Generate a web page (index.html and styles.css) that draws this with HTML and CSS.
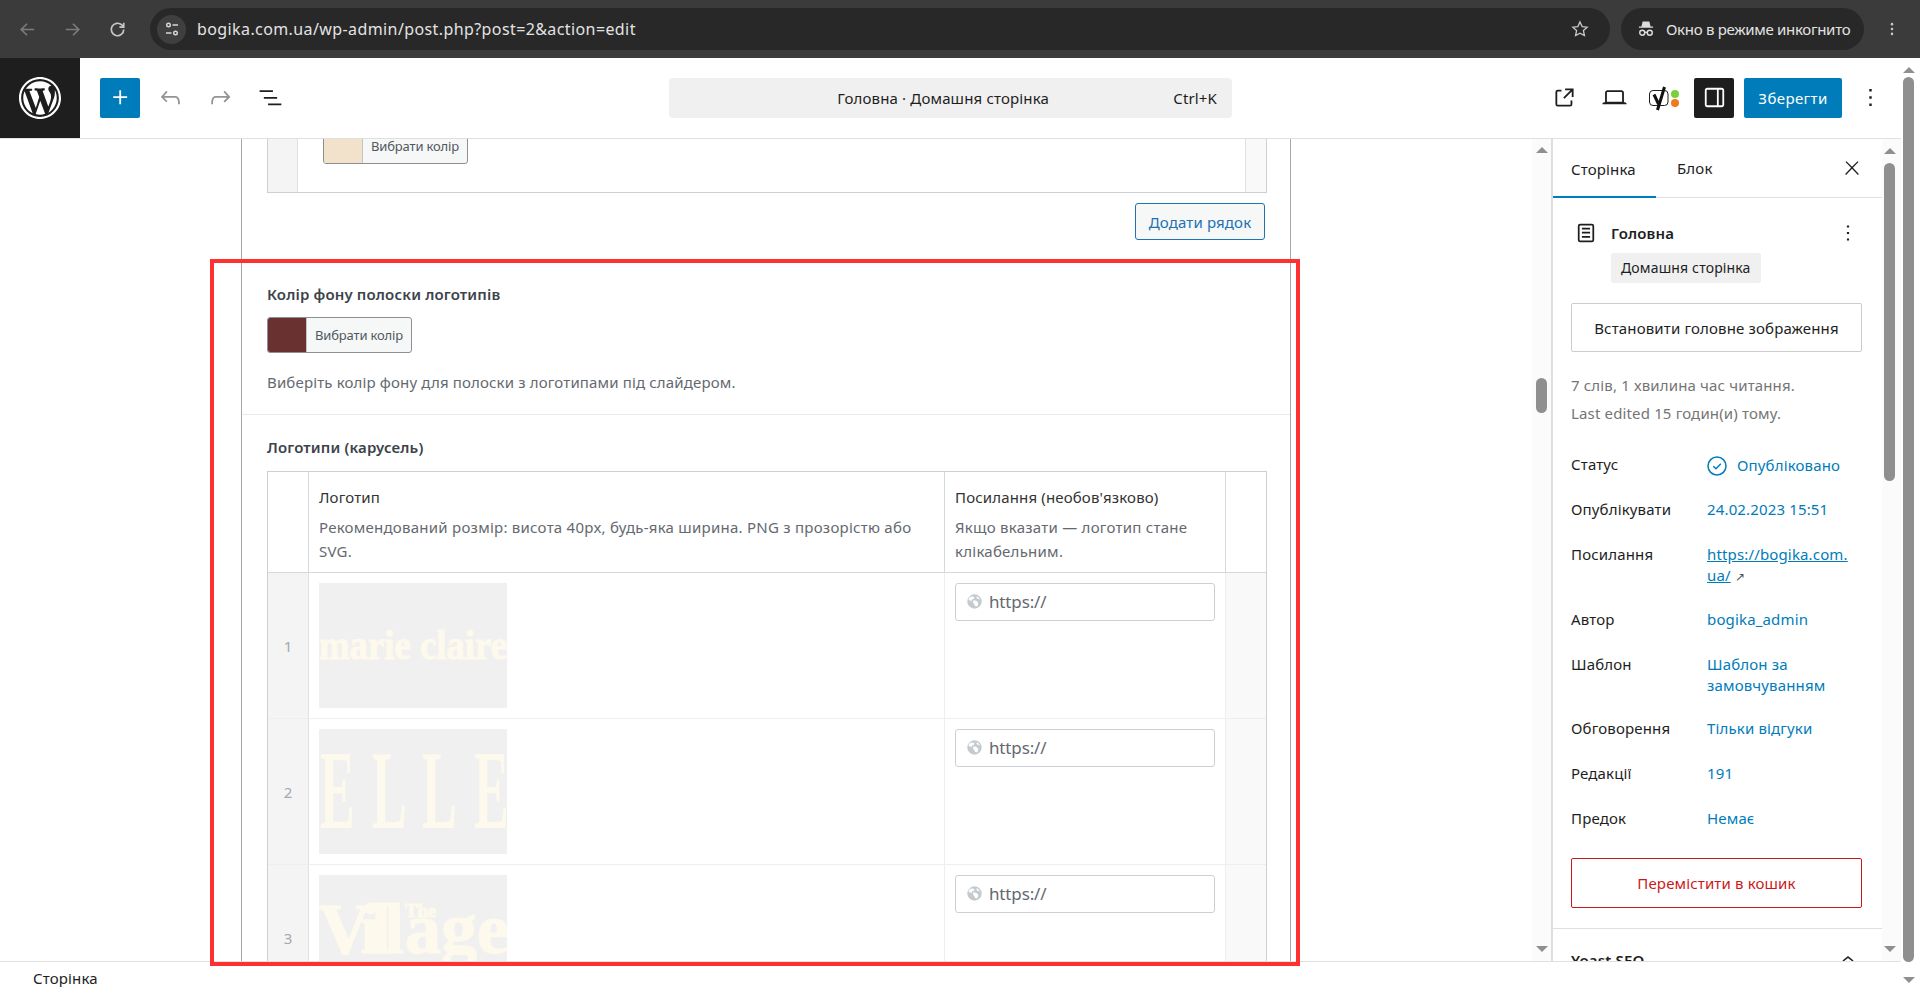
FILE: index.html
```html
<!DOCTYPE html>
<html lang="uk">
<head>
<meta charset="utf-8">
<title>Головна</title>
<link rel="stylesheet" href="styles.css">
</head>
<body>
<div class="browser">
  <div class="nav-icons">
    <svg class="ch-icon dim" viewBox="0 0 24 24"><path d="M19 12H6M11.500 6l-6 6 6 6"/></svg>
    <svg class="ch-icon dim" viewBox="0 0 24 24"><path d="M5 12h13M12.500 6l6 6-6 6"/></svg>
    <svg class="ch-icon" viewBox="0 0 24 24"><path d="M18.500 12a6.500 6.500 0 1 1-2-4.700L18.500 9.500M18.500 5v4.500H14"/></svg>
  </div>
  <div class="urlbar">
    <span class="site-pill"><svg viewBox="0 0 16 16"><circle cx="4.500" cy="4" r="1.800"/><path d="M8.500 4H14M2 12h5.500"/><circle cx="11.500" cy="12" r="1.800"/></svg></span>
    <span class="url">bogika.com.ua/wp-admin/post.php?post=2&amp;action=edit</span>
    <svg class="star" viewBox="0 0 24 24"><path d="M12 3.500l2.600 5.600 6 .7-4.500 4.100 1.200 6L12 17l-5.300 2.900 1.200-6-4.500-4.100 6-.7z"/></svg>
  </div>
  <div class="incognito">
    <svg viewBox="0 0 24 24"><path class="fill" d="M8 3h8l1.500 6h3v1.500h-17V9h3z"/><circle cx="7.500" cy="16.500" r="3"/><circle cx="16.500" cy="16.500" r="3"/><path d="M10.500 16h3"/></svg>
    <span>Окно в режиме инкогнито</span>
  </div>
  <svg class="ch-kebab" viewBox="0 0 24 24"><circle cx="12" cy="5.500" r="1.700"/><circle cx="12" cy="12" r="1.700"/><circle cx="12" cy="18.500" r="1.700"/></svg>
</div>

<div class="app">
  <div class="page">
    <header class="topbar">
      <a class="wp-logo"><svg viewBox="0 0 20 20"><path d="M20 10c0-5.520-4.480-10-10-10S0 4.480 0 10s4.480 10 10 10 10-4.480 10-10zM10 1.010c4.970 0 8.990 4.020 8.990 8.990s-4.020 8.990-8.990 8.990S1.010 14.970 1.010 10 5.030 1.010 10 1.010zM8.010 14.820L4.960 6.610c.49-.03 1.050-.08 1.050-.08.43-.05.38-1.010-.06-.99 0 0-1.290.1-2.130.1-.15 0-.33 0-.52-.01 1.440-2.170 3.900-3.600 6.700-3.600 2.090 0 3.990.79 5.410 2.090-.6-.08-1.450.35-1.450 1.420 0 .66.38 1.220.79 1.880.31.54.5 1.220.5 2.210 0 1.340-1.270 4.480-1.270 4.480l-2.710-7.500c.48-.03.75-.16.75-.16.43-.05.38-1.100-.05-1.080 0 0-1.300.11-2.140.11-.78 0-2.110-.11-2.110-.11-.43-.02-.48 1.060-.05 1.080l.84.08 1.120 3.040zm6.020 2.150L16.640 10s.67-1.690.39-3.810c.63 1.140.94 2.420.94 3.810 0 2.960-1.560 5.580-3.940 6.970zM2.680 6.770L6.500 17.250c-2.670-1.300-4.470-4.080-4.470-7.250 0-1.160.2-2.230.65-3.230zm7.450 4.530l2.290 6.250c-.75.27-1.570.42-2.420.42-.72 0-1.410-.11-2.060-.3z"/></svg></a>
      <div class="tools-left">
        <button class="tool primary"><svg viewBox="0 0 24 24"><path d="M11 12.500V17.500H12.500V12.500H17.500V11H12.500V6H11V11H6V12.500H11Z"/></svg></button>
        <button class="tool muted"><svg viewBox="0 0 24 24"><path d="M18.300 11.700c-.6-.6-1.400-.9-2.300-.9H6.700l2.900-3.300-1.100-1-4.500 5L8.500 16l1-1-2.700-2.700H16c.5 0 .9.2 1.300.5 1 1 1 3.400 1 4.500v.3h1.500v-.2c0-1.500 0-4.300-1.500-5.700z"/></svg></button>
        <button class="tool muted"><svg viewBox="0 0 24 24"><path d="M15.600 6.500l-1.100 1 2.900 3.300H8c-.9 0-1.700.3-2.300.9-1.400 1.500-1.400 4.200-1.400 5.600v.2h1.500v-.3c0-1.100 0-3.500 1-4.500.3-.3.7-.5 1.300-.5h9.200L14.500 15l1.100 1.100 4.600-4.600-4.600-5z"/></svg></button>
        <button class="tool"><svg viewBox="0 0 24 24"><path d="M3 6h11v1.500H3V6zm3.500 5.500h11V13h-11v-1.500zM21 17H10v1.500h11V17z"/></svg></button>
      </div>
      <div class="command">
        <span class="command-title">Головна · Домашня сторінка</span>
        <span class="command-key">Ctrl+K</span>
      </div>
      <div class="tools-right">
        <button class="tool"><svg viewBox="0 0 24 24"><path d="M19.500 4.500h-7V6h4.440l-5.970 5.970 1.060 1.060L18 7.060v4.440h1.500v-7Zm-13 1a2 2 0 0 0-2 2v10a2 2 0 0 0 2 2h10a2 2 0 0 0 2-2v-3H17v3a.5.5 0 0 1-.5.5h-10a.5.5 0 0 1-.5-.5v-10a.5.5 0 0 1 .5-.5h3V5.500h-3Z"/></svg></button>
        <button class="tool"><svg viewBox="0 0 24 24"><path d="M20.500 16h-.7V8c0-1.100-.9-2-2-2H6.200c-1.100 0-2 .9-2 2v8h-.7c-.8 0-1.500.7-1.500 1.500h20c0-.8-.7-1.500-1.500-1.500zM5.700 8c0-.3.2-.5.5-.5h11.600c.3 0 .5.2.5.5v7.600H5.700V8z"/></svg></button>
        <button class="tool"><svg class="yoast" viewBox="0 0 36 28"><rect class="y-box" x="3.500" y="6.500" width="18.500" height="15" rx="3.500"/><path class="y-mark" d="M8 10.500l4.500 9.500M18.500 3l-7 23"/><circle class="y-green" cx="29" cy="10" r="4"/><circle class="y-orange" cx="29" cy="19" r="4"/></svg></button>
        <button class="tool active"><svg viewBox="0 0 24 24"><path d="M18 4H6c-1.100 0-2 .9-2 2v12c0 1.100.9 2 2 2h12c1.100 0 2-.9 2-2V6c0-1.100-.9-2-2-2zm-4 14.500H6c-.3 0-.5-.2-.5-.5V6c0-.3.2-.5.5-.5h8v13zm4.500-.5c0 .3-.2.5-.5.5h-2.500v-13H18c.3 0 .5.2.5.5v12z"/></svg></button>
        <button class="save">Зберегти</button>
        <button class="tool kebab"><svg viewBox="0 0 24 24"><path d="M13 19h-2v-2h2v2zm0-6h-2v-2h2v2zm0-6h-2V5h2v2z"/></svg></button>
      </div>
    </header>

    <div class="workspace">
      <main class="canvas">
        <div class="metabox">
          <table class="repeater short">
            <tr>
              <td class="short-num"></td>
              <td class="short-main"><div class="short-inner">
                <button class="picker"><span class="swatch cream"></span><span class="picker-label">Вибрати колір</span></button>
              </div></td>
              <td class="short-end"></td>
            </tr>
          </table>
          <div class="add-row"><button class="add-btn">Додати рядок</button></div>

          <section class="field color-field">
            <div class="field-label">Колір фону полоски логотипів</div>
            <button class="picker"><span class="swatch wine"></span><span class="picker-label">Вибрати колір</span></button>
            <p class="field-desc">Виберіть колір фону для полоски з логотипами під слайдером.</p>
          </section>

          <section class="field logos-field">
            <div class="field-label logos-label">Логотипи (карусель)</div>
            <table class="repeater logos">
              <colgroup><col class="c-num"><col class="c-logo"><col class="c-link"><col class="c-end"></colgroup>
              <thead>
                <tr>
                  <th></th>
                  <th><div class="th-title">Логотип</div><div class="th-desc">Рекомендований розмір: висота 40px, будь-яка ширина. PNG з прозорістю або SVG.</div></th>
                  <th><div class="th-title">Посилання (необов'язково)</div><div class="th-desc">Якщо вказати — логотип стане клікабельним.</div></th>
                  <th></th>
                </tr>
              </thead>
              <tbody>
                <tr>
                  <td class="num">1</td>
                  <td class="logo-cell"><div class="logo-img"><svg viewBox="0 0 188 125"><text class="lg" x="0" y="76" font-size="42" textLength="188" lengthAdjust="spacingAndGlyphs">marie claire</text></svg></div></td>
                  <td class="link-cell"><div class="url-input"><svg class="globe" viewBox="0 0 20 20"><path d="M10 1.500a8.500 8.500 0 1 0 0 17 8.500 8.500 0 0 0 0-17zM5 4.500l3.500-.5 1.500 1.500-1 1.500-2 .5-.5 2L4 8.500l-1-.5A7 7 0 0 1 5 4.500zm8 11.500l-2.500-1-1-2.500L8 11l1-2.500 3 .5 2.500 2.500L14 14zM15 7l-2-.5-1-2 1.500-.5A7 7 0 0 1 16.500 8z"/></svg><span>https://</span></div></td>
                  <td class="end"></td>
                </tr>
                <tr>
                  <td class="num">2</td>
                  <td class="logo-cell"><div class="logo-img"><svg viewBox="0 0 188 125"><text class="lg elle" transform="translate(1 99) scale(.46 1)" x="0 113 222 335" y="0" font-size="113">ELLE</text></svg></div></td>
                  <td class="link-cell"><div class="url-input"><svg class="globe" viewBox="0 0 20 20"><path d="M10 1.500a8.500 8.500 0 1 0 0 17 8.500 8.500 0 0 0 0-17zM5 4.500l3.500-.5 1.500 1.500-1 1.500-2 .5-.5 2L4 8.500l-1-.5A7 7 0 0 1 5 4.500zm8 11.500l-2.500-1-1-2.500L8 11l1-2.500 3 .5 2.500 2.500L14 14zM15 7l-2-.5-1-2 1.500-.5A7 7 0 0 1 16.500 8z"/></svg><span>https://</span></div></td>
                  <td class="end"></td>
                </tr>
                <tr>
                  <td class="num">3</td>
                  <td class="logo-cell"><div class="logo-img"><svg viewBox="0 0 188 125"><text class="lg" y="78" font-size="72"><tspan x="0 41 52 65">Vill</tspan><tspan x="86">age</tspan></text><text class="lg" x="86" y="42" font-size="18" textLength="31" lengthAdjust="spacingAndGlyphs">The</text></svg></div></td>
                  <td class="link-cell"><div class="url-input"><svg class="globe" viewBox="0 0 20 20"><path d="M10 1.500a8.500 8.500 0 1 0 0 17 8.500 8.500 0 0 0 0-17zM5 4.500l3.500-.5 1.500 1.500-1 1.500-2 .5-.5 2L4 8.500l-1-.5A7 7 0 0 1 5 4.500zm8 11.500l-2.500-1-1-2.500L8 11l1-2.500 3 .5 2.500 2.500L14 14zM15 7l-2-.5-1-2 1.500-.5A7 7 0 0 1 16.500 8z"/></svg><span>https://</span></div></td>
                  <td class="end"></td>
                </tr>
              </tbody>
            </table>
          </section>
        </div>
      </main>

      <div class="scrollbar canvas-bar">
        <i class="arrow up"></i><b class="thumb canvas-thumb"></b><i class="arrow down"></i>
      </div>

      <aside class="sidebar">
        <div class="tabs">
          <span class="tab current">Сторінка</span>
          <span class="tab">Блок</span>
          <svg class="tab-close" viewBox="0 0 24 24"><path d="M13 11.800l6.100-6.300-1-1-6.100 6.200-6.100-6.200-1 1 6.100 6.300-6.500 6.700 1 1 6.500-6.600 6.500 6.600 1-1z"/></svg>
        </div>
        <div class="panel">
          <div class="doc-head">
            <svg class="doc-icon" viewBox="0 0 24 24"><path d="M15.500 7.500h-7V9h7V7.500Zm-7 3.500h7v1.500h-7V11Zm7 3.500h-7V16h7v-1.500Z"/><path d="M17 4H7a2 2 0 0 0-2 2v12a2 2 0 0 0 2 2h10a2 2 0 0 0 2-2V6a2 2 0 0 0-2-2ZM7 5.500h10a.5.5 0 0 1 .5.5v12a.5.5 0 0 1-.5.5H7a.5.5 0 0 1-.5-.5V6a.5.5 0 0 1 .5-.5Z"/></svg>
            <strong class="doc-title">Головна</strong>
            <svg class="doc-more" viewBox="0 0 24 24"><path d="M13 19h-2v-2h2v2zm0-6h-2v-2h2v2zm0-6h-2V5h2v2z"/></svg>
          </div>
          <span class="doc-tag">Домашня сторінка</span>
          <button class="wide-btn">Встановити головне зображення</button>
          <p class="stat first">7 слів, 1 хвилина час читання.</p>
          <p class="stat">Last edited 15 годин(и) тому.</p>
          <dl class="meta">
            <div class="meta-row"><dt>Статус</dt><dd class="status"><svg viewBox="0 0 20 20"><circle cx="10" cy="10" r="9"/><path d="M6.300 10.300l2.700 2.500 4.800-5"/></svg>Опубліковано</dd></div>
            <div class="meta-row"><dt>Опублікувати</dt><dd>24.02.2023 15:51</dd></div>
            <div class="meta-row"><dt>Посилання</dt><dd><u>https://bogika.com.<br>ua/</u> <span class="ext">↗</span></dd></div>
            <div class="meta-row"><dt>Автор</dt><dd>bogika_admin</dd></div>
            <div class="meta-row"><dt>Шаблон</dt><dd>Шаблон за<br>замовчуванням</dd></div>
            <div class="meta-row"><dt>Обговорення</dt><dd>Тільки відгуки</dd></div>
            <div class="meta-row"><dt>Редакції</dt><dd>191</dd></div>
            <div class="meta-row"><dt>Предок</dt><dd>Немає</dd></div>
          </dl>
          <button class="wide-btn danger">Перемістити в кошик</button>
        </div>
        <div class="yoast-head">
          <strong>Yoast SEO</strong>
          <svg viewBox="0 0 24 24"><path d="M6.500 12.400L12 8l5.500 4.400-.9 1.200L12 10l-4.600 3.600z"/></svg>
        </div>
      </aside>

      <div class="scrollbar side-bar">
        <i class="arrow up"></i><b class="thumb side-thumb"></b><i class="arrow down"></i>
      </div>
    </div>

    <footer class="footer">Сторінка</footer>
  </div>

  <div class="scrollbar outer-bar">
    <i class="arrow up"></i><b class="thumb outer-thumb"></b><i class="arrow down"></i>
  </div>
</div>

<div class="annotation"></div>
</body>
</html>
```
FILE: styles.css
```css
* { box-sizing: border-box; }
html, body { margin: 0; height: 987px; overflow: hidden; background: #fff; }
body { position: relative; font-family: "Noto Sans", "Open Sans", sans-serif; font-size: 15px; line-height: 20px; color: #1e1e1e; letter-spacing: .15px; }
button { font: inherit; letter-spacing: inherit; padding: 0; border: 0; background: none; cursor: pointer; color: inherit; }
p, dl, dd, dt { margin: 0; }
svg { display: block; }

/* browser */
.browser { height: 58px; background: #3b3b3b; display: flex; align-items: center; color: #e3e3e3; }
.nav-icons { display: flex; gap: 22px; padding-left: 16px; width: 150px; }
.ch-icon { width: 23px; height: 23px; fill: none; stroke: #c7c7c7; stroke-width: 1.800; flex: none; }
.ch-icon.dim { stroke: #7b7b7b; }
.urlbar { width: 1460px; height: 42px; border-radius: 21px; background: #282828; display: flex; align-items: center; padding: 0 20px 0 7px; }
.site-pill { width: 29px; height: 29px; border-radius: 50%; background: #3f3f3f; display: flex; align-items: center; justify-content: center; }
.site-pill svg { width: 16px; height: 16px; fill: none; stroke: #d8d8d8; stroke-width: 1.400; }
.url { margin-left: 11px; flex: 1; font-size: 16px; letter-spacing: .4px; }
.star { width: 20px; height: 20px; fill: none; stroke: #c7c7c7; stroke-width: 1.600; }
.incognito { margin-left: 11px; width: 243px; height: 42px; border-radius: 21px; background: #282828; display: flex; align-items: center; padding-left: 15px; gap: 10px; font-size: 15px; letter-spacing: -.3px; white-space: nowrap; }
.incognito svg { width: 20px; height: 20px; flex: none; fill: none; stroke: #dcdcdc; stroke-width: 1.700; }
.incognito .fill { fill: #dcdcdc; stroke: none; }
.ch-kebab { width: 18px; height: 18px; margin-left: 19px; fill: #c7c7c7; }

/* app frame */
.app { display: flex; height: 929px; }
.page { width: 1901px; display: flex; flex-direction: column; }
.topbar { height: 81px; flex: none; display: flex; align-items: center; border-bottom: 1px solid #e0e0e0; background: #fff; padding-bottom: 1px; }
.wp-logo { width: 80px; height: 80px; margin-bottom: -1px; background: #1e1e1e; display: flex; align-items: center; justify-content: center; flex: none; }
.wp-logo svg { width: 42px; height: 42px; fill: #fff; }
.tools-left { display: flex; gap: 10px; margin-left: 20px; }
.tool { width: 40px; height: 40px; display: flex; align-items: center; justify-content: center; border-radius: 2px; flex: none; }
.tool svg { width: 29px; height: 29px; flex: none; fill: #1e1e1e; }
.tool.primary { background: #007cba; }
.tool.primary svg { fill: #fff; }
.tool.muted svg { fill: #949494; }
.tool.active { background: #1e1e1e; }
.tool.active svg { fill: #fff; }
.command { margin-left: 379px; width: 563px; height: 40px; border-radius: 4px; background: #f0f0f0; display: flex; align-items: center; padding: 0 15px 0 44px; }
.command-title { flex: 1; text-align: center; }
.tools-right { margin-left: auto; margin-right: 11px; display: flex; gap: 10px; align-items: center; }
.tool svg.yoast { width: 36px; height: 28px; fill: none; }
.y-box { fill: none; stroke: #1e1e1e; stroke-width: 1; }
.y-mark { fill: none; stroke: #111; stroke-width: 3; }
.y-green { fill: #7ad03a; }
.y-orange { fill: #ee7c1b; }
.save { width: 98px; height: 40px; background: #007cba; color: #fff; border-radius: 2px; letter-spacing: .4px; }
.tool.kebab { margin-left: -2px; }

/* workspace */
.workspace { flex: 1; min-height: 0; display: flex; overflow: hidden; }
.canvas { flex: 1; min-width: 0; overflow: hidden; background: #fff; }
.metabox { width: 1050px; height: 100%; margin: 0 auto; border-left: 1px solid #a8a8a8; border-right: 1px solid #a8a8a8; overflow: hidden; }

.repeater { border-collapse: separate; border-spacing: 0; table-layout: fixed; width: 1000px; border-top: 1px solid #ccd0d4; border-left: 1px solid #ccd0d4; border-right: 1px solid #ccd0d4; }
.short { margin-left: 25px; border-top: 0; border-bottom: 1px solid #ccd0d4; }
.short td { padding: 0; height: 53px; }
.short-num { width: 30px; background: #f4f4f4; border-right: 1px solid #e1e1e1; }
.short-end { width: 21px; background: #f9f9f9; border-left: 1px solid #e1e1e1; }
.short-inner { height: 53px; overflow: hidden; display: flex; flex-direction: column; justify-content: flex-end; align-items: flex-start; padding: 0 0 28px 25px; }

.picker { flex: none; display: flex; width: 145px; height: 37px; border: 1px solid #8c8f94; border-radius: 3px; background: #f6f7f7; overflow: hidden; color: #50575e; font-size: 13px; letter-spacing: -.15px; }
.color-field .picker { height: 36px; }
.swatch { width: 39px; height: 100%; flex: none; border-right: 1px solid #c3c4c7; }
.cream { background: #f2e2cc; }
.wine { background: #693231; }
.picker-label { flex: 1; align-self: center; text-align: center; line-height: 18px; white-space: nowrap; }

.add-row { display: flex; justify-content: flex-end; padding: 10px 25px 20px 0; }
.add-btn { width: 130px; height: 37px; border: 1px solid #2271b1; border-radius: 3px; background: #f6f7f7; color: #2271b1; }

.field { padding: 24px 23px 0 25px; }
.color-field { padding-bottom: 22px; border-bottom: 1px solid #e9e9e9; }
.field-label { font-weight: 600; color: #3c434a; margin-bottom: 13px; }
.logos-field { padding-top: 22px; }
.logos-label { margin-bottom: 14px; }
.field-desc { margin-top: 19px; color: #646970; }

.c-num { width: 41px; }
.c-logo { width: 636px; }
.c-link { width: 281px; }
.c-end { width: 40px; }
.logos th { padding: 15px 10px 9px; text-align: left; font-weight: 400; vertical-align: top; border-right: 1px solid #d5d8dc; border-bottom: 1px solid #d5d8dc; }
.logos th:last-child { border-right: 0; }
.th-title { color: #333; margin-bottom: 8px; }
.th-desc { color: #646970; line-height: 24px; letter-spacing: .25px; }
.logos td { padding: 10px; vertical-align: top; border-right: 1px solid #eee; border-bottom: 1px solid #eee; }
.logos td:last-child { border-right: 0; }
.logos .num { padding: 0; text-align: center; vertical-align: middle; background: #f4f4f4; color: #a5a8ad; border-right-color: #e1e1e1; }
.logos .end { background: #f9f9f9; }
.logo-img { width: 188px; height: 125px; background: #f0f0f0; }
.logo-img svg { width: 188px; height: 125px; }
.lg { font-family: "Liberation Serif", serif; font-weight: 700; fill: #fdf9ec; stroke: #fdf9ec; stroke-width: 1.200; letter-spacing: 0; }
.elle { stroke-width: 0; }
.url-input { width: 260px; height: 38px; border: 1px solid #ccd0d4; border-radius: 3px; display: flex; align-items: center; padding-left: 10px; gap: 6px; color: #646970; font-size: 17px; letter-spacing: -.15px; }
.globe { width: 17px; height: 17px; fill: #c5cacf; flex: none; fill-rule: evenodd; margin-top: -2px; }

/* scrollbars */
.scrollbar { flex: none; background: #fbfbfb; display: flex; flex-direction: column; align-items: center; }
.canvas-bar { width: 19px; padding: 8px 0 9px; }
.side-bar { width: 19px; padding: 9px 4px 9px 0; }
.outer-bar { width: 19px; padding: 9px 4px 4px 0; background: #fff; }
.arrow { flex: none; width: 0; height: 0; border-left: 6px solid transparent; border-right: 6px solid transparent; }
.arrow.up { border-bottom: 6px solid #8f8f8f; }
.arrow.down { border-top: 6px solid #8f8f8f; margin-top: auto; }
.thumb { display: block; width: 11px; background: #8f8f8f; border-radius: 6px; }
.canvas-thumb { height: 35px; margin-top: 225px; }
.side-thumb { height: 318px; margin-top: 9px; }
.outer-thumb { height: 885px; margin-top: 4px; width: 11px; }

/* sidebar */
.sidebar { width: 331px; flex: none; border-left: 2px solid #dedede; overflow: hidden; background: #fff; }
.tabs { height: 59px; display: flex; align-items: center; border-bottom: 1px solid #e0e0e0; }
.tab { padding: 0 18px; height: 59px; display: flex; align-items: center; white-space: nowrap; }
.tab.current { width: 103px; box-shadow: inset 0 -2px 0 #007cba; margin-bottom: -1px; }
.tab + .tab { padding-left: 21px; }
.tab-close { width: 22px; height: 22px; margin-left: auto; margin-right: 19px; fill: #1e1e1e; }
.panel { padding: 23px 18px 20px; border-bottom: 1px solid #e0e0e0; }
.doc-head { display: flex; align-items: center; height: 24px; }
.doc-icon { width: 28px; height: 28px; margin: -2px 0 -2px 1px; fill: #1e1e1e; flex: none; }
.doc-title { margin-left: 11px; font-weight: 600; flex: 1; }
.doc-more { width: 26px; height: 26px; fill: #1e1e1e; margin: -1px 3px -1px 0; }
.doc-tag { display: block; width: max-content; margin: 8px 0 0 40px; height: 30px; line-height: 30px; padding: 0 10px; border-radius: 2px; background: #f0f0f0; font-size: 14px; }
.wide-btn { display: block; width: 291px; height: 49px; margin-top: 20px; border: 1px solid #ccc; border-radius: 2px; background: #fff; }
.stat { color: #757575; }
.stat.first { margin-top: 23px; margin-bottom: 8px; }
.meta { margin-top: 31px; }
.meta-row { display: grid; grid-template-columns: 136px 1fr; min-height: 45px; padding-bottom: 22px; line-height: 21px; }
.meta-row dd { color: #007cba; }
.meta-row .status { display: flex; align-items: center; white-space: nowrap; }
.status svg { width: 20px; height: 20px; margin-right: 10px; flex: none; fill: none; stroke: #007cba; stroke-width: 1.500; }
.meta-row .ext { font-size: 12px; color: #555; }
.danger { margin-top: 5px; height: 50px; border-color: #cc1818; color: #cc1818; }
.yoast-head { display: flex; align-items: center; justify-content: space-between; padding: 19px 22px 0 18px; }
.yoast-head strong { font-weight: 600; }
.yoast-head svg { width: 24px; height: 24px; fill: #1e1e1e; }

.footer { height: 26px; flex: none; border-top: 1px solid #e0e0e0; background: #fff; padding: 6px 0 0 33px; }

/* red annotation frame */
.annotation { position: absolute; left: 210px; top: 259px; width: 1090px; height: 707px; border: 4px solid #ff3030; pointer-events: none; }
```
